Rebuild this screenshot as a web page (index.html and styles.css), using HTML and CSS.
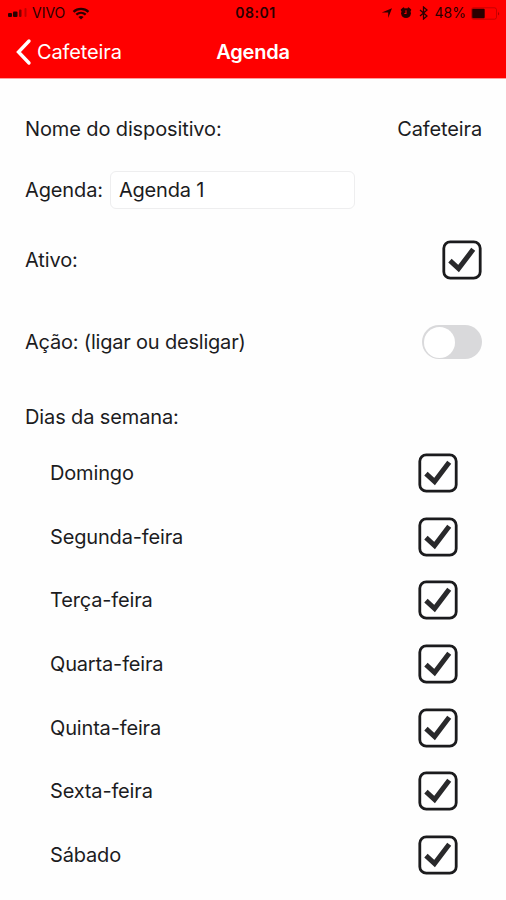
FILE: index.html
```html
<!DOCTYPE html>
<html lang="pt-BR">
  <head>
    <meta charset="UTF-8" />
    <title>Agenda</title>
    <link rel="stylesheet" href="styles.css">
  </head>
  <body>
    <!-- Shared check icon -->
    <svg class="sprite" width="0" height="0">
      <symbol id="check" viewBox="0 0 40 40">
        <rect x="1.8" y="1.8" width="36.4" height="36.4" rx="6.5" fill="#fff" stroke="#1b1b1d" stroke-width="2.8" />
        <path d="M9.800 22.300L16.600 28.600 29.700 11.300" fill="none" stroke="#29292b" stroke-width="5" stroke-linecap="square" />
      </symbol>
    </svg>

    <header class="header">
      <div class="status-bar">
        <div class="status-left">
          <svg width="21" height="10" viewBox="0 0 21 10">
            <rect x="0" y="5" width="4" height="4" rx="1" />
            <rect x="5" y="3.5" width="4.5" height="5.5" rx="1" />
            <rect x="11" y="1.5" width="2.5" height="7.5" rx="1" opacity="0.6" />
            <rect x="16.5" y="0" width="2" height="9" rx="1" opacity="0.3" />
          </svg>
          <span class="carrier">VIVO</span>
          <svg width="18" height="13" viewBox="0 0 18 13">
            <path d="M1.500 4.800c4.200-4 10.800-4 15 0M4.300 7.700c2.700-2.500 6.700-2.500 9.400 0" fill="none" stroke="#2a0000" stroke-width="2.300" />
            <path d="M9 12.500L6.400 9.900c1.500-1.300 3.700-1.300 5.200 0z" />
          </svg>
        </div>
        <span class="time">08:01</span>
        <div class="status-right">
          <svg width="12" height="12" viewBox="0 0 12 12">
            <path d="M.8 5.600L11 1.200 7.200 11V5.600z" />
          </svg>
          <svg class="alarm" width="12" height="12" viewBox="0 0 12 12">
            <circle cx="6" cy="6.200" r="4.900" />
            <path d="M1.800 3L3.500 1.400M10.200 3L8.500 1.400" stroke="#2a0000" stroke-width="2" stroke-linecap="round" />
            <path d="M6 3.200v3.300H4.300" fill="none" stroke="#f00" stroke-width="1.100" />
          </svg>
          <svg class="bluetooth" width="9" height="14" viewBox="0 0 9 14">
            <path d="M1 4l7 6-3.500 3V1L8 4l-7 6" fill="none" stroke="#2a0000" stroke-width="1.300" />
          </svg>
          <span class="battery-text">48%</span>
          <svg width="30" height="13" viewBox="0 0 30 13">
            <rect x=".5" y=".8" width="25" height="11.400" rx="2" fill="none" stroke="#7a0000" stroke-width=".7" opacity=".6" />
            <rect x="1.200" y="1.800" width="12.500" height="9.400" rx="1" />
            <path d="M27.300 4.500q1.500 2 0 4z" opacity=".6" />
          </svg>
        </div>
      </div>
      <nav class="nav-bar">
        <a class="back" href="#">
          <svg width="17" height="28" viewBox="0 0 17 28">
            <path d="M14 3L3.500 14 14 25" fill="none" stroke="#fff" stroke-width="3.400" stroke-linecap="round" />
          </svg>
          <span>Cafeteira</span>
        </a>
        <h1>Agenda</h1>
      </nav>
    </header>

    <main class="form">
      <div class="row row-device">
        <span>Nome do dispositivo:</span>
        <span>Cafeteira</span>
      </div>
      <div class="row row-name">
        <label for="name">Agenda:</label>
        <input id="name" class="name-input" type="text" value="Agenda 1" />
      </div>
      <div class="row row-active">
        <span>Ativo:</span>
        <svg class="checkbox"><use href="#check" /></svg>
      </div>
      <div class="row row-action">
        <span class="label-action">Ação: (ligar ou desligar)</span>
        <div class="switch"><div class="knob"></div></div>
      </div>
      <h2 class="label-days">Dias da semana:</h2>
      <ul class="days">
        <li><span>Domingo</span><svg class="checkbox"><use href="#check" /></svg></li>
        <li><span>Segunda-feira</span><svg class="checkbox"><use href="#check" /></svg></li>
        <li><span>Terça-feira</span><svg class="checkbox"><use href="#check" /></svg></li>
        <li><span>Quarta-feira</span><svg class="checkbox"><use href="#check" /></svg></li>
        <li><span>Quinta-feira</span><svg class="checkbox"><use href="#check" /></svg></li>
        <li><span>Sexta-feira</span><svg class="checkbox"><use href="#check" /></svg></li>
        <li><span>Sábado</span><svg class="checkbox"><use href="#check" /></svg></li>
      </ul>
    </main>
  </body>
</html>
```

FILE: styles.css
```css
:root {
  --red: #ff0000;
  --dark-red: #2a0000;
  --text: #1c1c1e;
  --light-gray: #eeeeef;
  --switch-gray: #d9d9db;
}

* {
  box-sizing: border-box;
}

body {
  margin: 0;
  height: 900px;
  overflow: hidden;
  font-family: "Inter", sans-serif;
  font-size: 20px;
  line-height: 24px;
  letter-spacing: -0.12px;
  background-color: #fefefe;
  color: var(--text);
}

svg {
  display: block;
  flex: none;
}

.sprite {
  position: absolute;
}

/* Header */
.header {
  height: 79px;
  background-color: var(--red);
  border-bottom: 1px solid #ff9c9c;
}

.status-bar {
  display: grid;
  grid-template-columns: 1fr auto 1fr;
  align-items: center;
  height: 26px;
  padding: 0 5px 0 8px;
  font-size: 14px;
  line-height: 18px;
  letter-spacing: 0;
  color: var(--dark-red);
  fill: var(--dark-red);
}

.status-left,
.status-right {
  display: flex;
  align-items: center;
}

.status-right {
  justify-content: flex-end;
}

.carrier {
  margin: 0 7px 0 3px;
}

.time {
  font-weight: 600;
  letter-spacing: 0.5px;
  margin-right: -2px;
}

.alarm {
  margin-left: 7px;
}

.bluetooth {
  margin: 0 7px 0 7px;
}

.battery-text {
  margin-right: 5px;
}

.nav-bar {
  display: grid;
  grid-template-columns: 1fr auto 1fr;
  align-items: center;
  height: 52px;
  padding: 0 15px;
  color: #fff;
}

.back {
  display: flex;
  align-items: center;
  gap: 5px;
  color: #fff;
  text-decoration: none;
}

.nav-bar h1 {
  margin: 0;
  font-size: 20px;
  font-weight: 600;
  letter-spacing: -0.2px;
}

/* Form */
.form {
  padding: 22px 24px 0 25px;
}

.row,
.days li {
  display: flex;
  align-items: center;
  justify-content: space-between;
}

.row-device {
  height: 56px;
}

.row-name {
  justify-content: flex-start;
  gap: 7px;
  height: 66px;
}

.name-input {
  width: 245px;
  height: 38px;
  padding: 0 8px;
  border: 1.5px solid var(--light-gray);
  border-radius: 6px;
  font: inherit;
  letter-spacing: -0.2px;
  color: inherit;
  background-color: #fff;
}

.row-active {
  height: 74px;
}

.row-action {
  height: 90px;
}

.label-action {
  letter-spacing: -0.2px;
}

.checkbox {
  width: 40px;
  height: 40px;
}

.switch {
  width: 60px;
  height: 34px;
  padding: 1.5px;
  border-radius: 17px;
  background-color: var(--switch-gray);
}

.knob {
  width: 31px;
  height: 31px;
  border-radius: 50%;
  background-color: #fff;
}

.label-days {
  margin: 18px 0 12.5px;
  font-size: 20px;
  font-weight: 400;
}

.days {
  list-style: none;
  margin: 0;
  padding: 0 24px 0 25px;
  letter-spacing: -0.16px;
}

.days li {
  height: 63.6px;
}
```
